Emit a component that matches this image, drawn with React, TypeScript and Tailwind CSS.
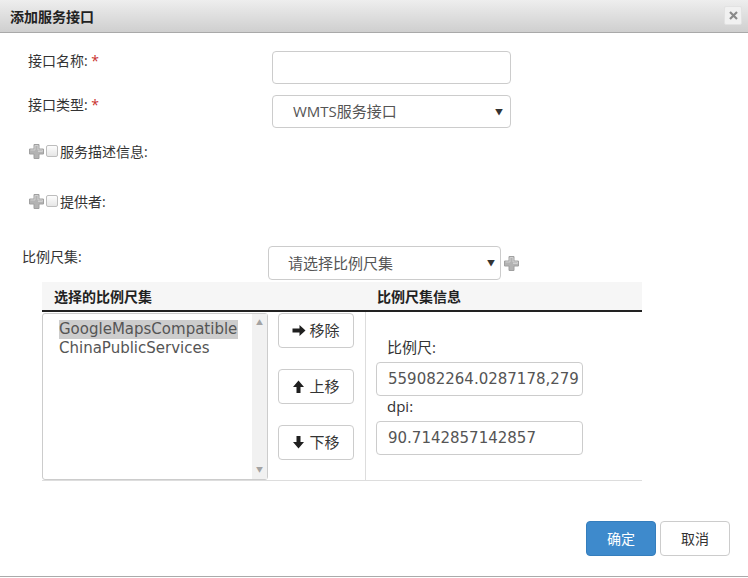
import React from 'react'

const cjk = '"Open Sans", "Noto Sans CJK SC", sans-serif'
const wide = '"DejaVu Sans", "Noto Sans CJK SC", sans-serif'

function PlusIcon() {
  return (
    <svg width="15" height="15" viewBox="0 0 15 15" className="shrink-0">
      <path d="M5 0.5h5v4.5h4.5v5h-4.5v4.5h-5v-4.5h-4.5v-5h4.5z" fill="#b3b3b3" stroke="#a0a0a0" strokeWidth="1" />
      <path d="M6 1.5h3v4.5h4.5v1.5h-4.5M6 1.5v4.5h-4.5" fill="none" stroke="#d0d0d0" strokeWidth="1" />
    </svg>
  )
}

function CheckBox() {
  return <span className="inline-block w-[12px] h-[12px] rounded-[2px] border border-[#bdbdbd] bg-gradient-to-b from-[#fdfdfd] to-[#e6e6e6] shrink-0" />
}

function Arrow({ dir }: { dir: 'right' | 'up' | 'down' }) {
  const d =
    dir === 'right'
      ? 'M0.5 4.5h7V1l6 5.5-6 5.5V8.5h-7z'
      : dir === 'up'
        ? 'M4.5 13V7H1l5.5-6.5L12 7H8.5v6z'
        : 'M4.5 0v6H1l5.5 6.5L12 6H8.5V0z'
  return (
    <svg width="14" height="13" viewBox="0 0 14 13" className="shrink-0">
      <path d={d} fill="#1f1f1f" />
    </svg>
  )
}

function SmallBtn({ dir, label }: { dir: 'right' | 'up' | 'down'; label: string }) {
  return (
    <button className="w-[76px] h-[35px] rounded-[4px] border border-[#ccc] bg-white flex items-center justify-center gap-[3px] text-[15px] text-[#333]">
      <Arrow dir={dir} />
      <span>{label}</span>
    </button>
  )
}

export default function App() {
  return (
    <div className="w-[748px] h-[578px] bg-white relative text-[#333]" style={{ fontFamily: cjk }}>
      {/* title bar */}
      <div className="h-[33px] flex items-center justify-between pl-[10px] pr-[6px] bg-gradient-to-b from-[#eeeeee] to-[#cfcfcf] border-b border-[#a9a9a9]">
        <span className="text-[14px] font-bold text-[#222]">添加服务接口</span>
        <div className="w-[18px] h-[19px] mt-[-2px] rounded-[2px] bg-[#f1f1f1] border border-[#e2e2e2] flex items-center justify-center">
          <svg width="9" height="9" viewBox="0 0 9 9">
            <path d="M1 1l7 7M8 1L1 8" stroke="#8a8a8a" strokeWidth="2.2" />
          </svg>
        </div>
      </div>

      <div className="flex flex-col">
        {/* name */}
        <div className="flex mt-[18px] pl-[28px]">
          <div className="w-[244px] text-[14px] leading-[20px]">
            接口名称: <span className="text-[#c9302c]">*</span>
          </div>
          <div className="w-[239px] h-[33px] rounded-[4px] border border-[#ccc] bg-white" />
        </div>
        {/* type */}
        <div className="flex mt-[11px] pl-[28px]">
          <div className="w-[244px] text-[14px] leading-[20px]">
            接口类型: <span className="text-[#c9302c]">*</span>
          </div>
          <div className="w-[239px] h-[33px] rounded-[4px] border border-[#ccc] bg-white flex items-center justify-between pl-[20px] pr-[7px] text-[15px] text-[#555]">
            <span>WMTS服务接口</span>
            <span className="text-[8px] text-[#333]">▼</span>
          </div>
        </div>
        {/* service desc */}
        <div className="flex items-center mt-[13px] pl-[29px] gap-[2px] h-[20px]">
          <PlusIcon />
          <CheckBox />
          <span className="text-[14px]">服务描述信息:</span>
        </div>
        {/* provider */}
        <div className="flex items-center mt-[30px] pl-[29px] gap-[2px] h-[20px]">
          <PlusIcon />
          <CheckBox />
          <span className="text-[14px]">提供者:</span>
        </div>
        {/* scale set */}
        <div className="flex items-start mt-[35px] pl-[22px]">
          <div className="w-[246px] text-[14px] leading-[20px] pt-[1px]">比例尺集:</div>
          <div className="w-[233px] h-[34px] rounded-[4px] border border-[#ccc] bg-white flex items-center justify-between pl-[19px] pr-[5px] text-[15px] text-[#555]">
            <span>请选择比例尺集</span>
            <span className="text-[8px] text-[#333]">▼</span>
          </div>
          <div className="mt-[10px] ml-[3px]">
            <PlusIcon />
          </div>
        </div>

        {/* table */}
        <div className="ml-[42px] w-[600px] mt-[2px]">
          <div className="flex h-[30px] bg-[#f6f6f6] border-b-2 border-[#222] items-center text-[14px] font-bold text-[#222]">
            <div className="w-[324px] pl-[12px]">选择的比例尺集</div>
            <div className="pl-[11px]">比例尺集信息</div>
          </div>
          <div className="flex h-[169px] border-b border-[#ddd]">
            {/* list */}
            <div className="w-[226px] h-[167px] mt-[1px] border border-[#ccc] rounded-[3px] flex">
              <div className="flex-1 pt-[6px] pl-[16px] text-[15px] leading-[19px] text-[#555]" style={{ fontFamily: wide }}>
                <div className="inline-block bg-[#cdcdcd] pr-[1px]">GoogleMapsCompatible</div>
                <div>ChinaPublicServices</div>
              </div>
              <div className="w-[15px] bg-[#f1f1f1] flex flex-col justify-between items-center py-[4px] text-[7px] text-[#a3a3a3]">
                <span>▲</span>
                <span>▼</span>
              </div>
            </div>
            {/* buttons */}
            <div className="w-[98px] border-r border-[#ddd] flex flex-col gap-[21px] pl-[10px] pt-[1px]">
              <SmallBtn dir="right" label="移除" />
              <SmallBtn dir="up" label="上移" />
              <SmallBtn dir="down" label="下移" />
            </div>
            {/* info */}
            <div className="flex-1 pl-[10px] pt-[25px] text-[15px] text-[#333]">
              <div className="pl-[11px] leading-[20px]">比例尺:</div>
              <div className="mt-[5px] w-[207px] h-[34px] rounded-[4px] border border-[#ccc] flex items-center pl-[11px] text-[#555] overflow-hidden whitespace-nowrap" style={{ fontFamily: wide }}>
                559082264.0287178,279
              </div>
              <div className="pl-[11px] leading-[20px]">dpi:</div>
              <div className="mt-[5px] w-[207px] h-[34px] rounded-[4px] border border-[#ccc] flex items-center pl-[11px] text-[#555]" style={{ fontFamily: wide }}>
                90.7142857142857
              </div>
            </div>
          </div>
        </div>

        {/* footer */}
        <div className="flex justify-end gap-[4px] mt-[40px] pr-[18px]">
          <button className="w-[70px] h-[35px] rounded-[4px] bg-[#3e8acc] border border-[#357ebd] text-white text-[14px]">确定</button>
          <button className="w-[70px] h-[35px] rounded-[4px] bg-white border border-[#ccc] text-[#333] text-[14px]">取消</button>
        </div>
      </div>
      <div className="absolute left-0 right-0 bottom-[1px] h-[1px] bg-[#aaa]" />
    </div>
  )
}
